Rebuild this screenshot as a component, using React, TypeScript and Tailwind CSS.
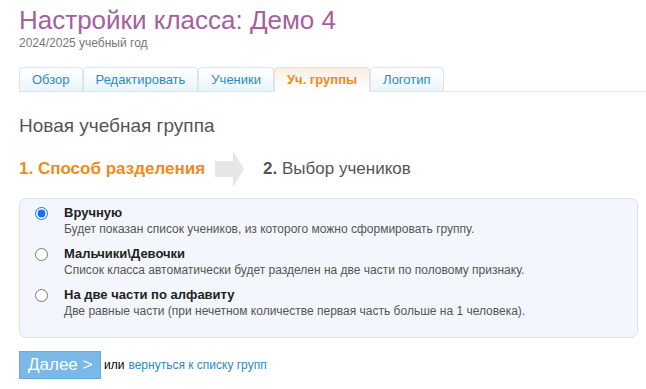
import React, { useState } from "react";

const tabs = ["Обзор", "Редактировать", "Ученики", "Уч. группы", "Логотип"];

const options = [
  { id: "manual", title: "Вручную", text: "Будет показан список учеников, из которого можно сформировать группу." },
  { id: "gender", title: "Мальчики\\Девочки", text: "Список класса автоматически будет разделен на две части по половому признаку." },
  { id: "alpha", title: "На две части по алфавиту", text: "Две равные части (при нечетном количестве первая часть больше на 1 человека)." },
];

export default function App() {
  const [mode, setMode] = useState("manual");
  const active = "Уч. группы";

  return (
    <div className="min-h-screen bg-white pl-[19px] pr-[8px] pt-[5px] text-[#333]" style={{ fontFamily: '"Liberation Sans", Arial, sans-serif' }}>
      <h1 className="text-[26px] leading-[30px] text-[#a4619f]">Настройки класса: Демо 4</h1>
      <div className="mt-[1px] text-[12px] leading-[14px] text-[#777]">2024/2025 учебный год</div>

      {/* tabs */}
      <div className="mt-[17px] -mr-[8px] flex items-end border-b border-[#dfe6ea]">
        {tabs.map((t) => (
          <div
            key={t}
            className={
              t === active
                ? "-mb-px h-[25px] rounded-t-[4px] border border-b-white border-[#dfe4e8] bg-gradient-to-b from-[#fdeee2] to-white px-[12px] pt-[4px] text-[13px] leading-[15px] font-bold text-[#ef8a1b]"
                : "h-[24px] rounded-t-[4px] border border-b-0 border-[#dfe4e8] bg-gradient-to-b from-white to-[#e9f5fa] px-[12px] pt-[4px] text-[13px] leading-[15px] text-[#2f8bbf]"
            }
          >
            {t}
          </div>
        ))}
      </div>

      <h2 className="mt-[23px] text-[19px] leading-[22px] text-[#555]">Новая учебная группа</h2>

      {/* steps */}
      <div className="mt-[14px] flex items-center">
        <span className="text-[17px] font-bold text-[#ef8a1b]">1. Способ разделения</span>
        <svg width="29" height="36" viewBox="0 0 29 36" className="ml-[10px] mr-[19px]">
          <path d="M0 10 H18 V0 L29 18 L18 36 V26 H0 Z" fill="#e6e6e6" />
        </svg>
        <span className="text-[17px] text-[#555]">
          <b>2.</b> Выбор учеников
        </span>
      </div>

      {/* options */}
      <div className="mt-[11px] rounded-[7px] border border-[#dde3ea] bg-[#f3f7fd] px-[15px] pt-[6px] pb-[9px]">
        {options.map((o) => (
          <label key={o.id} className="mb-[10px] flex cursor-pointer items-start">
            <input
              type="radio"
              name="mode"
              checked={mode === o.id}
              onChange={() => setMode(o.id)}
              className="mt-[2px] mr-[16px] h-[13px] w-[13px] accent-[#1a73e8]"
            />
            <div>
              <div className="text-[13px] font-bold leading-[16px] text-[#222]">{o.title}</div>
              <div className="mt-[1px] text-[12px] leading-[14px] text-[#555]">{o.text}</div>
            </div>
          </label>
        ))}
      </div>

      {/* actions */}
      <div className="mt-[13px] flex items-center text-[12px]">
        <button className="h-[28px] w-[82px] border border-[#6aa8dc] bg-[#7ab8e8] pl-[8px] text-left text-[17px] text-white">
          Далее &gt;
        </button>
        <span className="ml-[3px] text-black">или</span>
        <a className="ml-[4px] text-[#2a8bc3]">вернуться к списку групп</a>
      </div>
    </div>
  );
}
